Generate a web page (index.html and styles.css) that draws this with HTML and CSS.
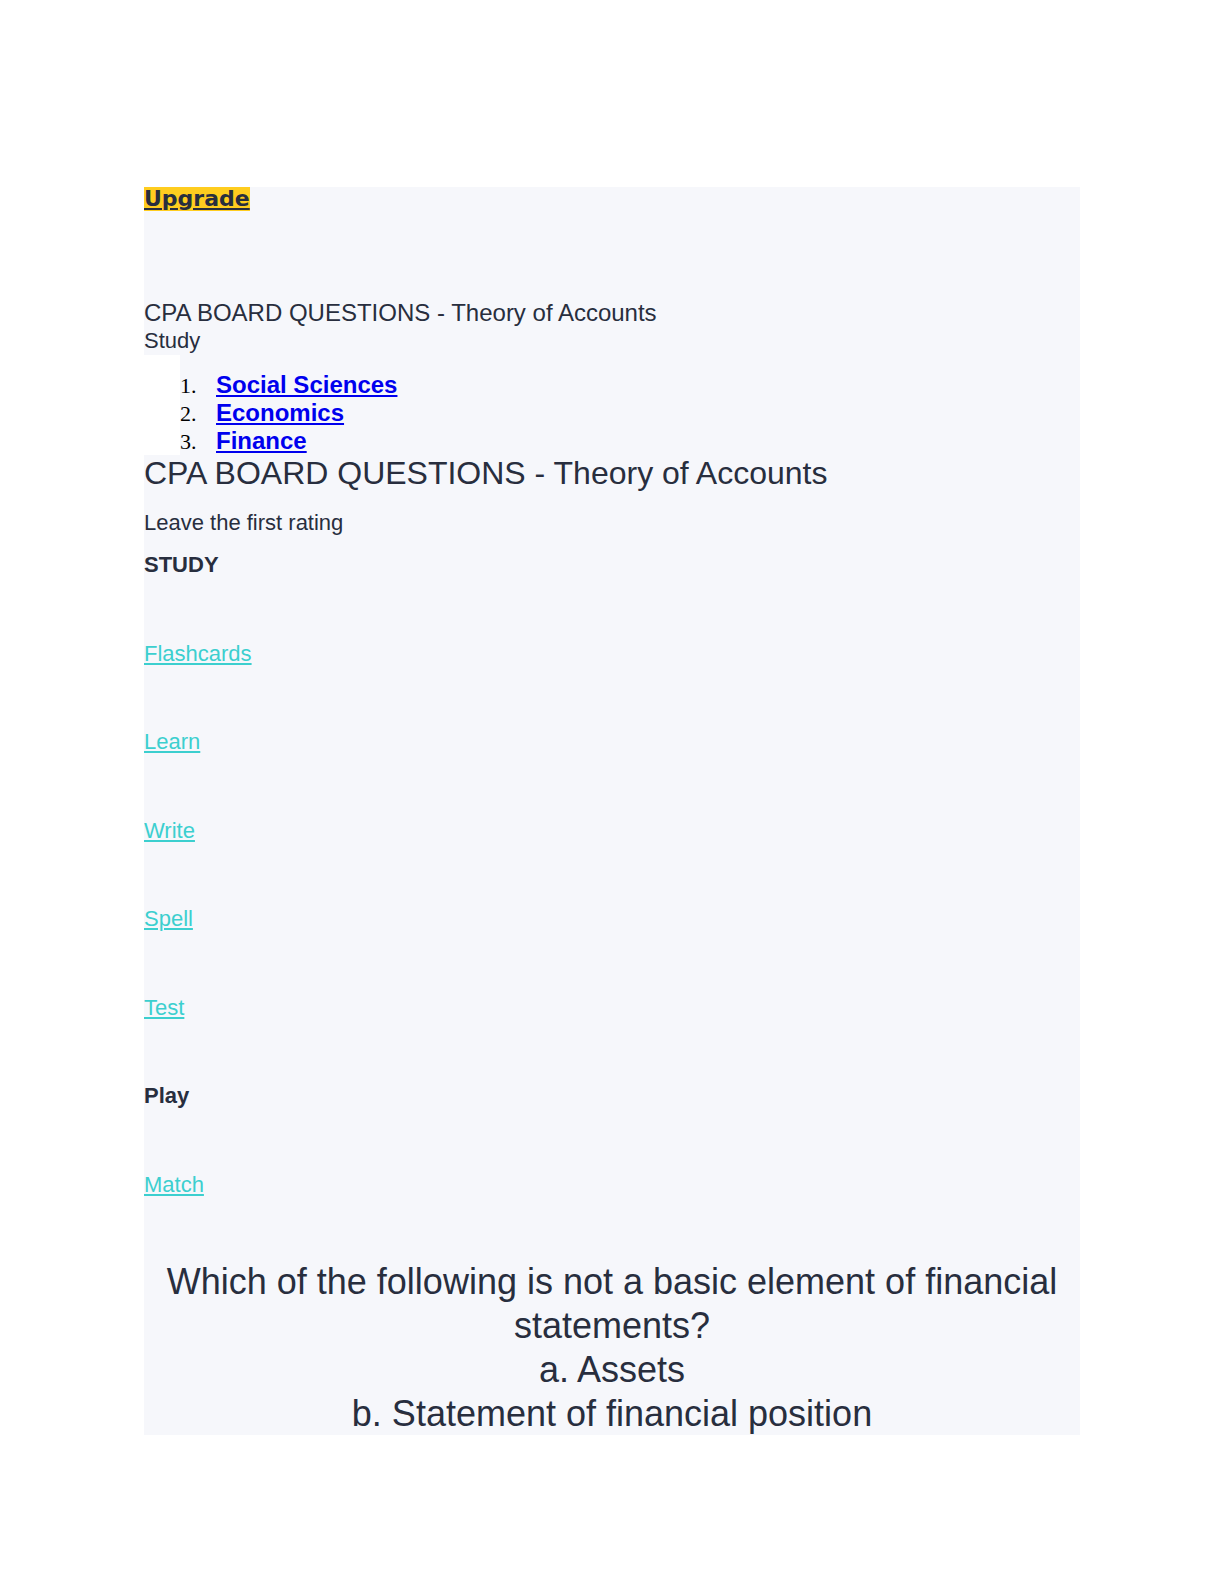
FILE: index.html
```html
<!DOCTYPE html>
<html lang="en">
<head>
<meta charset="utf-8">
<title>CPA BOARD QUESTIONS - Theory of Accounts</title>
<link rel="stylesheet" href="styles.css">
</head>
<body>
<div class="page">
  <div class="upgrade-row"><a class="upgrade" href="#">Upgrade</a></div>
  <div class="set-title">CPA BOARD QUESTIONS - Theory of Accounts</div>
  <div class="set-sub">Study</div>
  <ol class="crumbs">
    <li><a href="#">Social Sciences</a></li>
    <li><a href="#">Economics</a></li>
    <li><a href="#">Finance</a></li>
  </ol>
  <h1 class="heading">CPA BOARD QUESTIONS - Theory of Accounts</h1>
  <div class="rating">Leave the first rating</div>
  <div class="group-label">STUDY</div>
  <div class="mode"><a href="#">Flashcards</a></div>
  <div class="mode"><a href="#">Learn</a></div>
  <div class="mode"><a href="#">Write</a></div>
  <div class="mode"><a href="#">Spell</a></div>
  <div class="mode"><a href="#">Test</a></div>
  <div class="group-label play">Play</div>
  <div class="mode"><a href="#">Match</a></div>
  <div class="question">
    Which of the following is not a basic element of financial statements?<br>
    a. Assets<br>
    b. Statement of financial position
  </div>
</div>
</body>
</html>
```
FILE: styles.css
```css
html, body {
  margin: 0;
  padding: 0;
  background: #ffffff;
}

.page {
  margin: 187px 0 0 144px;
  width: 936px;
  height: 1248px;
  overflow: hidden;
  background: #f6f7fb;
  color: #282e3e;
  font-family: "Liberation Sans", Arial, sans-serif;
}

.upgrade-row {
  height: 24px;
  line-height: 24px;
}

.upgrade {
  font-family: "DejaVu Sans", sans-serif;
  font-weight: bold;
  font-size: 22px;
  color: #282e3e;
  background: #ffcd1f;
  text-decoration: underline;
}

.set-title {
  margin-top: 88px;
  font-size: 24px;
  line-height: 28px;
}

.set-sub {
  font-size: 22px;
  line-height: 28px;
}

.crumbs {
  margin: 0;
  padding: 16px 0 0 22px;
  border-left: 36px solid #ffffff;
  font-family: "Liberation Serif", "Times New Roman", serif;
  font-size: 22px;
  color: #000;
}

.crumbs li {
  line-height: 27px;
  padding-left: 14px;
}

.crumbs a {
  font-family: "Liberation Sans", Arial, sans-serif;
  font-weight: bold;
  font-size: 24px;
  color: #0000ee;
  text-decoration: underline;
}

.heading {
  margin: 0;
  font-size: 32px;
  font-weight: normal;
  line-height: 36px;
}

.rating {
  margin-top: 19px;
  font-size: 22px;
  line-height: 26px;
}

.group-label {
  margin-top: 16px;
  font-size: 22px;
  font-weight: bold;
  line-height: 26px;
}

.group-label.play {
  margin-top: 62.5px;
}

.mode {
  margin-top: 62.5px;
  font-size: 22px;
  line-height: 26px;
}

.mode a {
  color: #3ccfcf;
  text-decoration: underline;
}

.question {
  margin-top: 62px;
  padding: 0;
  text-align: center;
  font-size: 36px;
  line-height: 44px;
}
```
